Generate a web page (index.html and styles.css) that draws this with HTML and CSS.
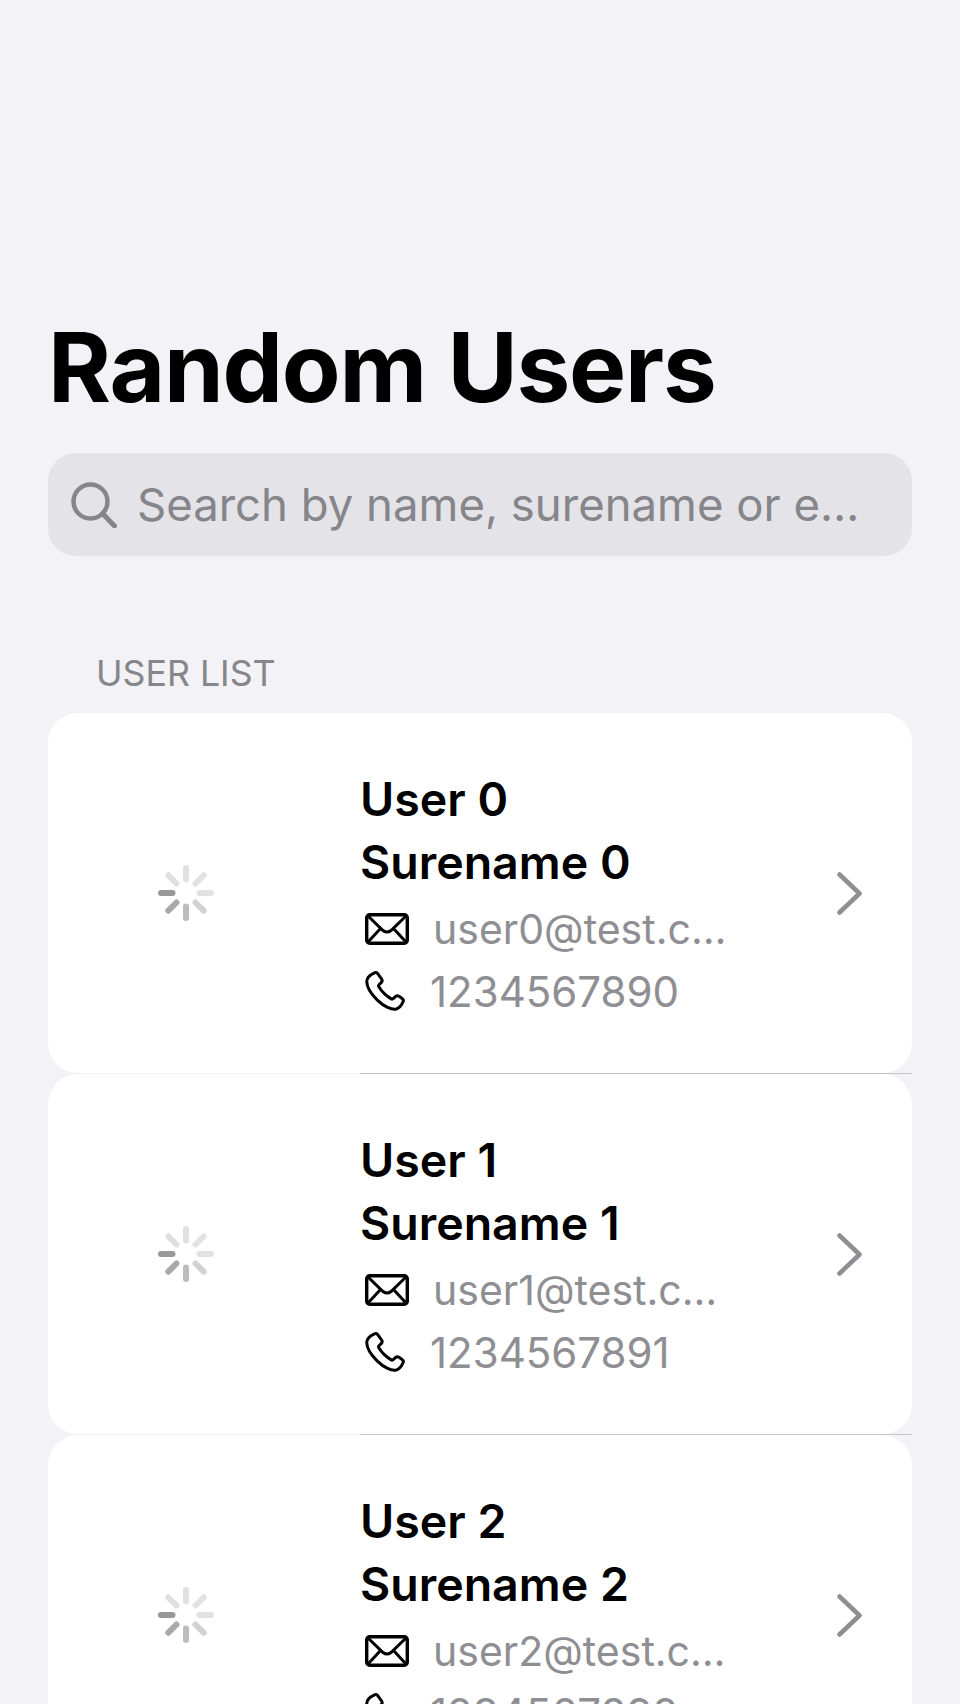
FILE: index.html
```html
<!DOCTYPE html>
<html lang="en">
<head>
    <meta charset="UTF-8">
    <title>Random Users</title>
    <link rel="stylesheet" href="styles.css">
</head>
<body>
<svg class="icon-defs" width="0" height="0">
    <defs>
        <symbol id="spinner" viewBox="0 0 60 60">
            <g stroke-width="6" stroke-linecap="round">
                <path d="M30 5V16.5" stroke="#e0e0e0"/>
                <path d="M47.7 12.3L39.5 20.5" stroke="#e2e2e2"/>
                <path d="M55 30H43.5" stroke="#e2e2e2"/>
                <path d="M47.7 47.7L39.5 39.5" stroke="#d2d2d2"/>
                <path d="M30 55V43.5" stroke="#bcbcbc"/>
                <path d="M12.3 47.7L20.5 39.5" stroke="#a9a9a9"/>
                <path d="M5 30H16.5" stroke="#989898"/>
                <path d="M12.3 12.3L20.5 20.5" stroke="#e0e0e0"/>
            </g>
        </symbol>
        <symbol id="chevron" viewBox="0 0 26 43">
            <path d="M2.5 2.5L22.5 21.5L2.5 40.5" fill="none" stroke="#8e8e93" stroke-width="4.5" stroke-linecap="round" stroke-linejoin="round"/>
        </symbol>
        <symbol id="mail" viewBox="0 0 44 32">
            <rect x="1.7" y="1.7" width="40.6" height="28.6" rx="3" fill="none" stroke="#000" stroke-width="3.4"/>
            <path d="M3 3L18 17.5Q22 20.5 26 17.5L41 3M3 29L15.5 15.5M41 29L28.5 15.5" fill="none" stroke="#000" stroke-width="3"/>
        </symbol>
        <symbol id="phone" viewBox="0 0 40 40">
            <path d="M9.5 1.8C10.8 1.2 12 1.6 12.9 2.8L16.6 8C17.4 9.2 17.3 10.5 16.2 11.6L14 13.8C13.4 14.4 13.4 15 13.8 15.7C15.3 18.2 17.2 20.6 19.6 22.9C21.8 25 24.2 26.6 26.3 27.9C27 28.3 27.6 28.2 28.2 27.7L30.4 25.6C31.5 24.6 32.8 24.5 34 25.3L37.1 27.4C38.4 28.3 38.7 29.6 38 30.9C36.6 33.9 34.6 37.2 31.3 38C26.5 39 19 35.5 12.6 29.3C6 22.8 1.5 15 1.8 10C2 6.3 6.1 3.4 9.5 1.8Z" fill="none" stroke="#000" stroke-width="3" stroke-linejoin="round"/>
        </symbol>
    </defs>
</svg>

<main class="page">
    <h1 class="page-title">Random Users</h1>

    <div class="search-bar">
        <svg class="search-icon" width="46" height="46" viewBox="0 0 46 46">
            <circle cx="19.5" cy="19.5" r="17" fill="none" stroke="#85858a" stroke-width="4.5"/>
            <path d="M31.5 31.5L43.5 44" fill="none" stroke="#85858a" stroke-width="5" stroke-linecap="round"/>
        </svg>
        <span class="search-placeholder">Search by name, surename or email</span>
    </div>

    <h2 class="section-title">USER LIST</h2>

    <div class="user-list">
        <div class="user-item">
            <div class="user-avatar"><svg width="60" height="60"><use href="#spinner"/></svg></div>
            <div class="user-info">
                <div class="user-name">User 0<br>Surename 0</div>
                <div class="user-line user-email">
                    <svg class="mail-icon" width="44" height="32"><use href="#mail"/></svg>
                    <span class="user-text">user0@test.com</span>
                </div>
                <div class="user-line user-phone">
                    <svg class="phone-icon" width="40" height="40"><use href="#phone"/></svg>
                    <span class="user-text">1234567890</span>
                </div>
            </div>
            <svg class="user-chevron" width="26" height="43"><use href="#chevron"/></svg>
        </div>
        <div class="user-item">
            <div class="user-avatar"><svg width="60" height="60"><use href="#spinner"/></svg></div>
            <div class="user-info">
                <div class="user-name">User 1<br>Surename 1</div>
                <div class="user-line user-email">
                    <svg class="mail-icon" width="44" height="32"><use href="#mail"/></svg>
                    <span class="user-text">user1@test.com</span>
                </div>
                <div class="user-line user-phone">
                    <svg class="phone-icon" width="40" height="40"><use href="#phone"/></svg>
                    <span class="user-text">1234567891</span>
                </div>
            </div>
            <svg class="user-chevron" width="26" height="43"><use href="#chevron"/></svg>
        </div>
        <div class="user-item">
            <div class="user-avatar"><svg width="60" height="60"><use href="#spinner"/></svg></div>
            <div class="user-info">
                <div class="user-name">User 2<br>Surename 2</div>
                <div class="user-line user-email">
                    <svg class="mail-icon" width="44" height="32"><use href="#mail"/></svg>
                    <span class="user-text">user2@test.com</span>
                </div>
                <div class="user-line user-phone">
                    <svg class="phone-icon" width="40" height="40"><use href="#phone"/></svg>
                    <span class="user-text">1234567892</span>
                </div>
            </div>
            <svg class="user-chevron" width="26" height="43"><use href="#chevron"/></svg>
        </div>
    </div>
</main>
</body>
</html>
```

FILE: styles.css
```css
html, body {
    margin: 0;
    height: 1704px;
    overflow: hidden;
}

body {
    background-color: #f2f2f7;
    color: #000;
    font-family: "Inter", "Liberation Sans", sans-serif;
}

.icon-defs {
    display: block;
    height: 0;
}

.page {
    padding: 314px 48px 0;
}

.page-title {
    margin: 0;
    font-size: 96px;
    font-weight: 700;
    line-height: 106px;
    letter-spacing: -1.2px;
}

.search-bar {
    display: flex;
    align-items: center;
    height: 103px;
    margin-top: 33px;
    padding: 0 40px 0 23px;
    border-radius: 28px;
    background-color: #e3e3e8;
}

.search-icon {
    flex-shrink: 0;
    margin-right: 20px;
}

.search-placeholder {
    overflow: hidden;
    color: #85858a;
    font-size: 45.5px;
    white-space: nowrap;
    text-overflow: ellipsis;
}

.section-title {
    margin: 96px 0 0 48px;
    color: #85858a;
    font-size: 35.7px;
    font-weight: 400;
    line-height: 42px;
}

.user-list {
    margin-top: 19px;
}

.user-item {
    display: flex;
    align-items: center;
    position: relative;
    height: 360px;
    margin-bottom: 1px;
    border-radius: 30px;
    background-color: #fff;
}

.user-item::after {
    content: "";
    position: absolute;
    left: 312px;
    right: 0;
    bottom: -1px;
    height: 1px;
    background-color: #c6c6c8;
}

.user-avatar {
    display: flex;
    justify-content: center;
    flex-shrink: 0;
    width: 276px;
}

.user-info {
    flex: 1;
    margin-left: 36px;
    padding-top: 4px;
    min-width: 0;
}

.user-name {
    font-size: 46.5px;
    font-weight: 600;
    line-height: 63px;
}

.user-line {
    display: flex;
    align-items: center;
    height: 63px;
}

.user-email {
    margin-top: 4px;
}

.user-phone {
    margin-top: -1px;
}

.mail-icon {
    flex-shrink: 0;
    margin: 0 24px 0 5px;
}

.phone-icon {
    flex-shrink: 0;
    margin: 0 25px 0 5px;
}

.user-text {
    color: #8e8e93;
    font-size: 42px;
    white-space: nowrap;
}

.user-email .user-text {
    overflow: hidden;
    width: 300px;
    font-size: 41px;
    text-overflow: ellipsis;
}

.user-chevron {
    flex-shrink: 0;
    margin-right: 49px;
}
```
